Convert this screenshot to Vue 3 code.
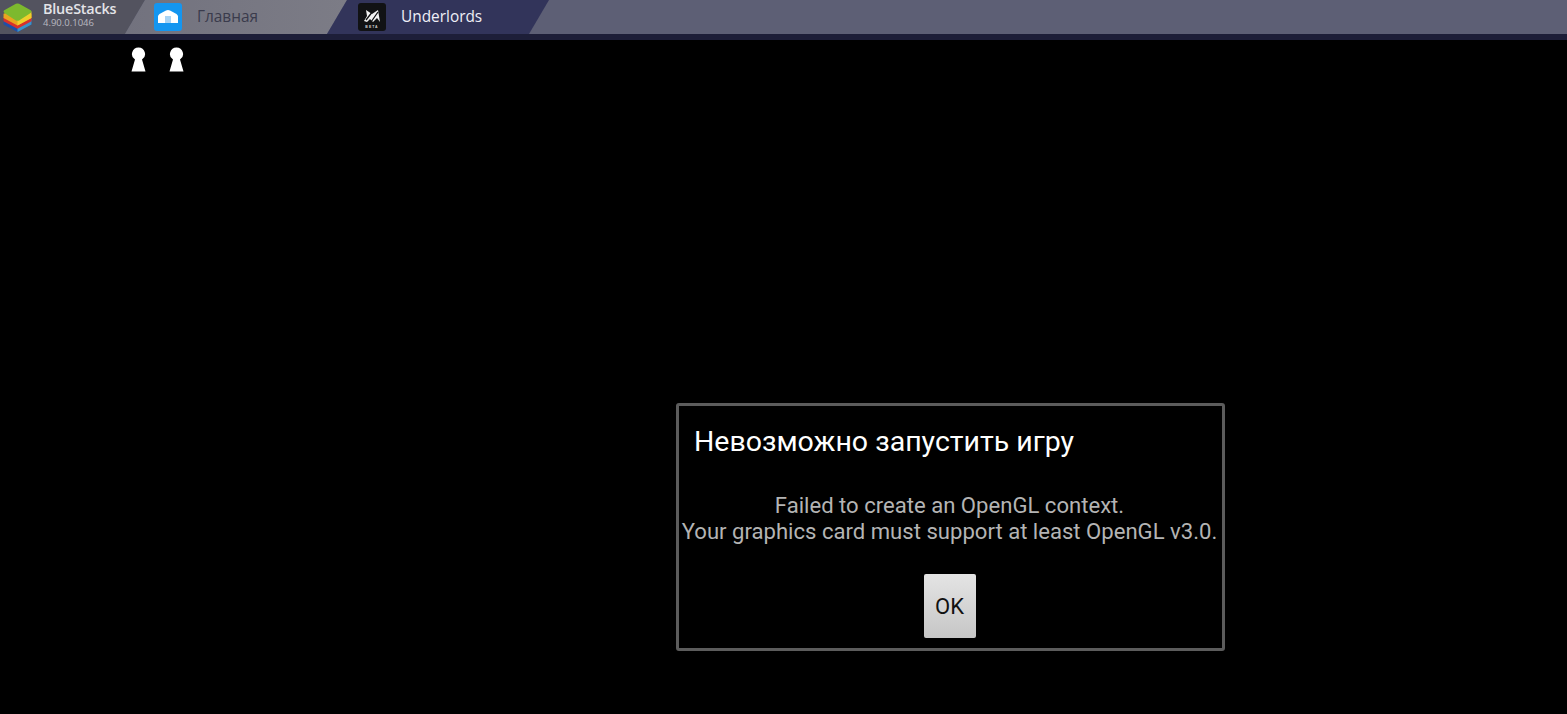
<template>
  <div class="screen">
    <header class="topbar">
      <div class="brand">
        <svg class="brand-logo" viewBox="3 1 26 27" width="29" height="29">
          <path fill="#1f4fa8" d="M3 17 L16 11 L29 17 L29 21 L16 28 L3 21 Z" />
          <path fill="#3b93c9" d="M16 20 L29 16 L29 21 L16 28 Z" />
          <path fill="#d8312b" d="M3 14 L16 9 L29 14 L29 18 L16 25 L3 18 Z" />
          <path fill="#e9a51f" d="M3 11 L16 6 L29 11 L29 15 L16 22 L3 15 Z" />
          <path fill="#f0d02c" d="M16 15 L29 9 L29 15 L16 22 Z" />
          <path fill="#7db92e" d="M3 9 Q3 8 4.500 7.300 L14.500 1.800 Q16 1 17.500 1.800 L27.500 7.300 Q29 8 29 9 Q29 10 27.500 10.800 L17.500 17.200 Q16 18 14.500 17.200 L4.500 10.800 Q3 10 3 9 Z" />
        </svg>
        <div class="brand-text">
          <strong>BlueStacks</strong>
          <small>4.90.0.1046</small>
        </div>
      </div>

      <div class="tab tab-home">
        <span class="tab-icon home-icon">
          <svg viewBox="0 0 28 28" width="28" height="28">
            <path fill="#ffffff" d="M4 13.500 Q4 12 5.500 11 L12 7.500 Q14 6.700 16 7.500 L22.500 11 Q24 12 24 13.500 L24 20 L4 20 Z" />
            <rect fill="#a9d4f5" x="11" y="13" width="6" height="7" />
          </svg>
        </span>
        <span class="tab-label">Главная</span>
      </div>

      <div class="tab tab-game">
        <span class="tab-icon game-icon">
          <svg viewBox="0 0 28 28" width="28" height="28">
            <path fill="#f2f2f2" d="M8 7 L14 11 L20 7 L22 19 L19 15 L15 19 L12 16 L9 19 L6 18 L9 13 Z" />
            <path stroke="#111214" stroke-width="1.300" fill="none" d="M8 17 L15 8 M13 19 L20 9" />
            <text x="14" y="25" text-anchor="middle" class="beta">BETA</text>
          </svg>
        </span>
        <span class="tab-label">Underlords</span>
      </div>
    </header>

    <main class="stage">
      <div class="keys">
        <svg v-for="n in 2" :key="n" viewBox="0 0 15 25" width="15" height="25">
          <path fill="#ffffff" d="M7.500 0.500 A6.500 6.500 0 0 1 11 12.500 L14.500 24.500 L0.500 24.500 L4 12.500 A6.500 6.500 0 0 1 7.500 0.500 Z" />
        </svg>
      </div>

      <section class="dialog">
        <h2>Невозможно запустить игру</h2>
        <p>
          Failed to create an OpenGL context.<br />
          Your graphics card must support at least OpenGL v3.0.
        </p>
        <button type="button">OK</button>
      </section>
    </main>
  </div>
</template>

<script setup>
</script>

<style>
html,
body {
  margin: 0;
  background: #000;
}
</style>

<style scoped>
.screen {
  width: 1567px;
  height: 714px;
  overflow: hidden;
  background: #000;
  font-family: Roboto, "Noto Sans", sans-serif;
}

.topbar {
  display: flex;
  height: 34px;
  background: #5d5f75;
  border-bottom: 6px solid #1d1e38;
}

.brand {
  display: flex;
  align-items: center;
  gap: 11px;
  width: 145px;
  padding-left: 3px;
  box-sizing: border-box;
  background: #53535f;
  clip-path: polygon(0 0, 100% 0, calc(100% - 20px) 100%, 0 100%);
}

.brand-text {
  display: flex;
  flex-direction: column;
  gap: 2px;
  margin-top: -5px;
  font-family: "Open Sans", sans-serif;
  line-height: 1;
}

.brand-text strong {
  font-size: 14.4px;
  font-weight: 600;
  color: #e4e4e8;
  letter-spacing: -0.2px;
}

.brand-text small {
  font-size: 9.500px;
  color: #b9b9c0;
}

.tab {
  display: flex;
  align-items: center;
  width: 222px;
  box-sizing: border-box;
  margin-left: -20px;
  clip-path: polygon(20px 0, 100% 0, calc(100% - 20px) 100%, 0 100%);
  font-family: "Open Sans", sans-serif;
  font-size: 15.400px;
}

.tab-label {
  margin-top: -2px;
}

.tab-home {
  padding-left: 29px;
  gap: 15px;
  background: linear-gradient(90deg, #72727e, #7c7c86);
  color: #3a3b4c;
}

.tab-game {
  padding-left: 31px;
  gap: 15px;
  background: #32345a;
  color: #eeeef6;
}

.tab-icon {
  display: flex;
  width: 28px;
  height: 28px;
  border-radius: 3px;
}

.home-icon {
  background: #1496f0;
}

.game-icon {
  background: #111214;
}

.beta {
  font-family: "Liberation Sans", sans-serif;
  font-size: 3.500px;
  font-weight: 700;
  letter-spacing: 1px;
  fill: #d0d0d0;
}

.keys {
  display: flex;
  gap: 23px;
  padding: 7px 0 0 131px;
}

.dialog {
  display: flex;
  flex-direction: column;
  align-items: center;
  width: 549px;
  height: 248px;
  box-sizing: border-box;
  margin: 331px 0 0 676px;
  padding-right: 2px;
  border: 3px solid #5c5c5c;
  border-radius: 3px;
}

.dialog h2 {
  align-self: flex-start;
  margin: 19px 0 0 15px;
  font-size: 28.500px;
  font-weight: 400;
  line-height: 34px;
  color: #fff;
}

.dialog p {
  margin: 33px 0 0;
  font-size: 22.100px;
  line-height: 26px;
  text-align: center;
  white-space: nowrap;
  color: #b4b4b4;
}

.dialog button {
  width: 52px;
  height: 64px;
  margin-top: 30px;
  padding: 0;
  border: none;
  border-radius: 2px;
  background: linear-gradient(#e4e4e4, #c6c6c6);
  font-family: Roboto, sans-serif;
  font-size: 22px;
  color: #111;
}
</style>
